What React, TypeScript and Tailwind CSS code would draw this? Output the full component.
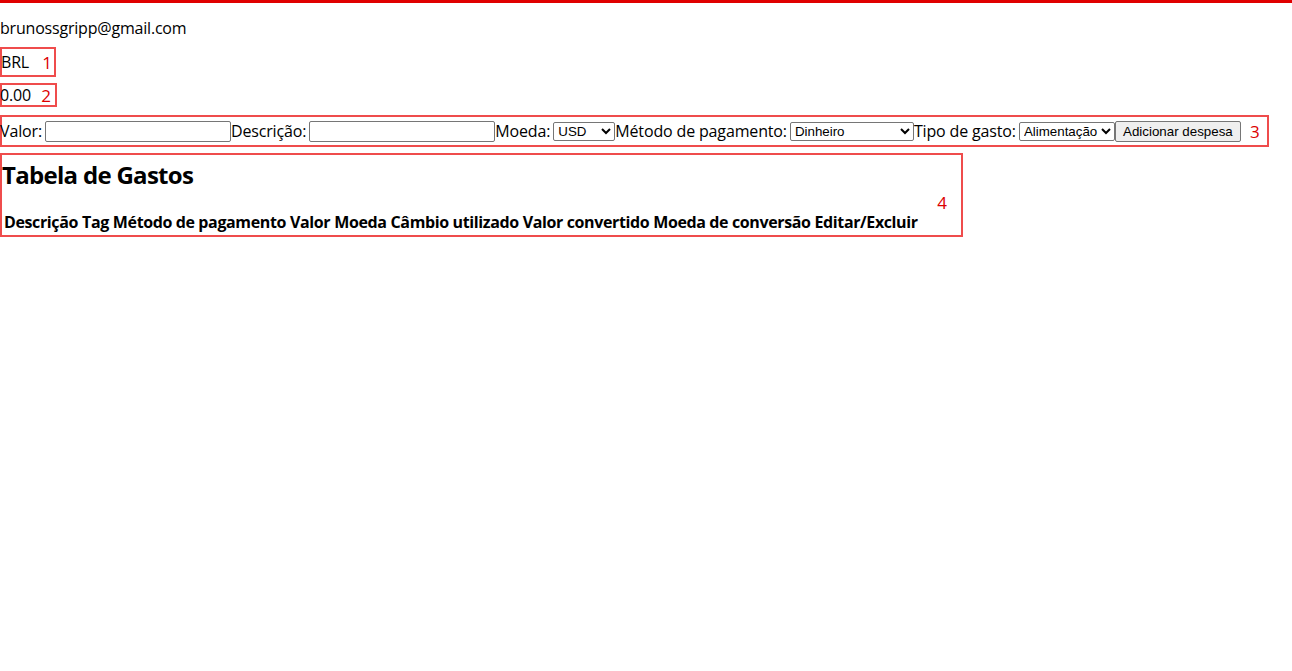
import React from "react";

const boxCls = "border-2 border-[#ef4c4c]";
const tagCls = "text-[#dc0000] text-[17px] leading-none tracking-normal font-['Open_Sans',sans-serif]";
const ctrlFont = "font-['Liberation_Sans',Arial,sans-serif] text-[13.33px] tracking-normal";

const columns = [
  "Descrição",
  "Tag",
  "Método de pagamento",
  "Valor",
  "Moeda",
  "Câmbio utilizado",
  "Valor convertido",
  "Moeda de conversão",
  "Editar/Excluir",
];

export default function App() {
  return (
    <div className="min-h-screen bg-white text-black font-['Open_Sans',sans-serif] text-[16px] tracking-[-0.2px] whitespace-nowrap">
      <div className="h-[3px] bg-[#e00000]" />

      <div className="pt-[13px] leading-6">brunossgripp@gmail.com</div>

      {/* 1: moeda */}
      <div className={`${boxCls} mt-[7px] w-[56px] h-[30px] flex items-center justify-between pr-[2px]`}>
        <span className="-ml-[1px]">BRL</span>
        <span className={tagCls}>1</span>
      </div>

      {/* 2: total */}
      <div className={`${boxCls} mt-[6px] w-[57px] h-[24px] flex items-center justify-between pr-[4px]`}>
        <span className="-ml-[2px] leading-5">0.00</span>
        <span className={tagCls}>2</span>
      </div>

      {/* 3: formulário */}
      <form
        className={`${boxCls} mt-[8px] w-[1269px] h-[32px] flex items-center tracking-[-0.15px]`}
        onSubmit={(e) => e.preventDefault()}
      >
        <label className="-ml-[2px] flex items-center shrink-0">
          Valor:
          <input
            type="text"
            className={`${ctrlFont} ml-[3px] w-[186px] h-[21px] border border-[#767676] rounded-[2px] bg-white px-[2px]`}
          />
        </label>
        <label className="flex items-center shrink-0">
          Descrição:
          <input
            type="text"
            className={`${ctrlFont} ml-[3px] w-[186px] h-[21px] border border-[#767676] rounded-[2px] bg-white px-[2px]`}
          />
        </label>
        <label className="flex items-center shrink-0">
          Moeda:
          <select
            defaultValue="USD"
            className={`${ctrlFont} ml-[3px] w-[62px] h-[19px] border border-[#767676] rounded-[2px] bg-white text-black`}
          >
            <option>USD</option>
            <option>EUR</option>
          </select>
        </label>
        <label className="flex items-center shrink-0">
          Método de pagamento:
          <select
            defaultValue="Dinheiro"
            className={`${ctrlFont} ml-[3px] w-[124px] h-[19px] border border-[#767676] rounded-[2px] bg-white text-black`}
          >
            <option>Dinheiro</option>
            <option>Cartão de crédito</option>
            <option>Cartão de débito</option>
          </select>
        </label>
        <label className="flex items-center shrink-0">
          Tipo de gasto:
          <select
            defaultValue="Alimentação"
            className={`${ctrlFont} ml-[3px] w-[96px] h-[19px] border border-[#767676] rounded-[2px] bg-white text-black`}
          >
            <option>Alimentação</option>
            <option>Lazer</option>
            <option>Trabalho</option>
            <option>Transporte</option>
            <option>Saúde</option>
          </select>
        </label>
        <button
          type="submit"
          className={`${ctrlFont} shrink-0 w-[126px] h-[21px] border border-[#767676] rounded-[2px] bg-[#efefef] px-[6px]`}
        >
          Adicionar despesa
        </button>
        <span className={`${tagCls} ml-[9px]`}>3</span>
      </form>

      {/* 4: tabela */}
      <div className={`${boxCls} mt-[6px] w-[963px] h-[84px] flex`}>
        <div className="flex-1 -ml-[2px]">
          <h2 className="text-[24px] font-bold leading-7 pt-[6px] pl-[2px] tracking-[-0.7px]">Tabela de Gastos</h2>
          <div className="mt-[21px] flex gap-[4px] pl-[4px] font-bold leading-6 tracking-[-0.38px]">
            {columns.map((c) => (
              <span key={c} className="shrink-0">{c}</span>
            ))}
          </div>
        </div>
        <span className={`${tagCls} self-center mr-[14px] mt-[14px]`}>4</span>
      </div>
    </div>
  );
}
